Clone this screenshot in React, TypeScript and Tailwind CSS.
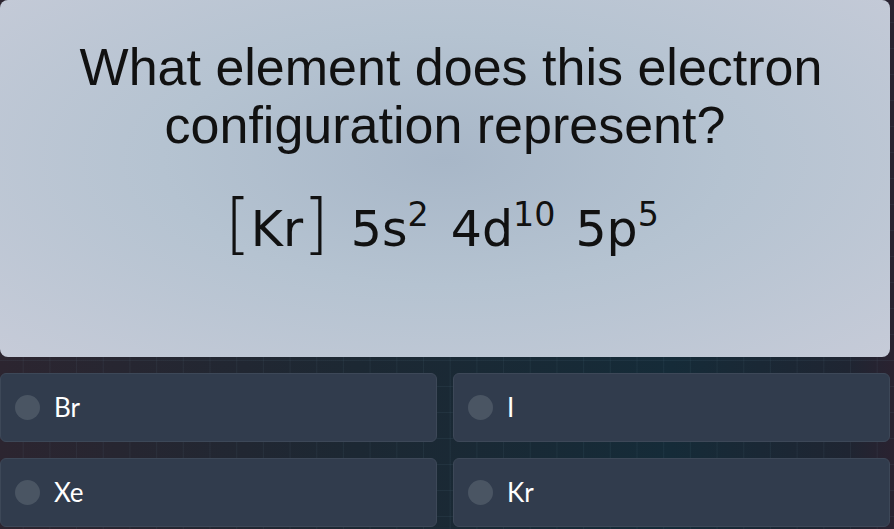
import React from 'react';

const OPTIONS = ['Br', 'I', 'Xe', 'Kr'];

function Sup({ children }: { children: React.ReactNode }) {
  return <span className="relative -top-[0.6em] text-[0.68em] leading-none">{children}</span>;
}

export default function App() {
  return (
    <div className="relative h-[529px] w-[894px] overflow-hidden bg-[linear-gradient(90deg,#2c2530_0%,#1c2833_40%,#152b38_75%,#1f2532_95%,#2a2230_100%)] font-['Lato',sans-serif]">
      <div className="absolute inset-0 bg-[linear-gradient(rgba(120,160,180,0.08)_1px,transparent_1px),linear-gradient(90deg,rgba(120,160,180,0.08)_1px,transparent_1px)] bg-[size:26.7px_26px] bg-[position:-4px_-4px]" />
      <div className="relative flex w-[890px] flex-col gap-4">
        <div className="flex h-[357px] flex-col items-center rounded-lg bg-[radial-gradient(ellipse_at_50%_45%,#a8b7c8_0%,#b5c3d1_45%,#c6cbd8_100%)] pt-[38px] text-center">
          <h1 className="font-['Liberation_Sans',Arial,sans-serif] text-[52px] leading-[58px] text-[#111]">
            <span className="pl-[12px]">What element does this electron</span>
            <br />
            configuration represent?
          </h1>
          <div className="mt-[37px] flex items-baseline font-['DejaVu_Sans',sans-serif] text-[49px] leading-[66px] text-[#111]">
            <span className="-ml-[6px]">
              <span className="font-extralight text-[66px]">[</span>Kr<span className="font-extralight text-[66px]">]</span>
            </span>
            <span className="ml-[22px]">5s<Sup>2</Sup></span>
            <span className="ml-[22px]">4d<Sup>10</Sup></span>
            <span className="ml-[20px]">5p<Sup>5</Sup></span>
          </div>
        </div>
        <div className="grid grid-cols-2 gap-4">
          {OPTIONS.map((o) => (
            <div
              key={o}
              className="flex h-[69px] items-center gap-[14px] rounded-md border border-[#3d4858] bg-[#313c4d] pl-[14px]"
            >
              <span className="h-[25px] w-[25px] rounded-full bg-[#4a5563]" />
              <span className="text-[26px] text-white">{o}</span>
            </div>
          ))}
        </div>
      </div>
    </div>
  );
}
